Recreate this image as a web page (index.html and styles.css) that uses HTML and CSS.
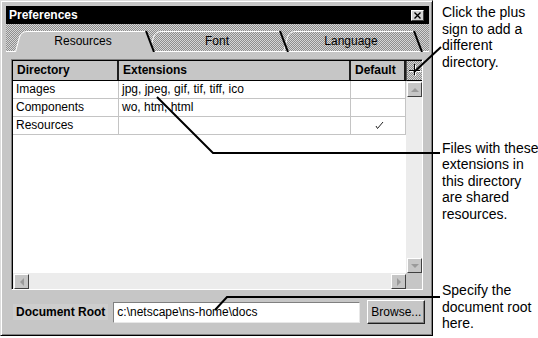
FILE: index.html
```html
<!DOCTYPE html>
<html lang="en">
<head>
    <meta charset="UTF-8">
    <title>Preferences</title>
    <link rel="stylesheet" href="styles.css">
</head>
<body>
<div class="page">
    <div class="window">
        <div class="titlebar">
            <span class="title">Preferences</span>
            <span class="close">
                <svg width="7" height="7" viewBox="0 0 7 7"><path d="M0.5,0.5 L6.5,6.5 M6.5,0.5 L0.5,6.5" stroke="#000" stroke-width="1.4"/></svg>
            </span>
        </div>

        <div class="tabs">
            <div class="tab tab-active">
                <svg width="140" height="22" viewBox="0 0 140 22">
                    <path d="M0,22 L4,7 Q6,1 12,1 L131,1 L139,22 Z" fill="#c6c6c6"/>
                    <path d="M0.5,22 L4.5,7 Q6.5,1.5 12,1.5 L131,1.5" fill="none" stroke="#fff"/>
                    <path d="M131,1 L139,22" stroke="#000" stroke-width="2"/>
                </svg>
                <span>Resources</span>
            </div>
            <div class="tab tab-font">
                <svg width="140" height="22" viewBox="0 0 140 22">
                    <path d="M0.5,22 L4.5,7 Q6.5,1.5 12,1.5 L131,1.5" fill="none" stroke="#fff"/>
                    <path d="M131,1 L139,22" stroke="#000" stroke-width="2"/>
                </svg>
                <span>Font</span>
            </div>
            <div class="tab">
                <svg width="140" height="22" viewBox="0 0 140 22">
                    <path d="M0.5,22 L4.5,7 Q6.5,1.5 12,1.5 L131,1.5" fill="none" stroke="#fff"/>
                    <path d="M131,1 L139,22" stroke="#000" stroke-width="2"/>
                </svg>
                <span>Language</span>
            </div>
        </div>

        <div class="panel">
            <div class="table">
                <div class="head">
                    <div class="hcell">Directory</div>
                    <div class="hcell">Extensions</div>
                    <div class="hcell">Default</div>
                </div>
                <div class="plus">
                    <svg width="16" height="18" viewBox="0 0 16 18">
                        <path d="M8.5,4 V15 M3,10.5 H14" stroke="#fff" stroke-width="1"/>
                        <path d="M7.5,3 V14 M2,9.5 H13" stroke="#000" stroke-width="1"/>
                    </svg>
                </div>

                <div class="rows">
                    <div class="row">
                        <div class="cell">Images</div>
                        <div class="cell">jpg, jpeg, gif, tif, tiff, ico</div>
                        <div class="cell"></div>
                    </div>
                    <div class="row">
                        <div class="cell">Components</div>
                        <div class="cell">wo, htm, html</div>
                        <div class="cell"></div>
                    </div>
                    <div class="row">
                        <div class="cell">Resources</div>
                        <div class="cell"></div>
                        <div class="cell cell-check">
                            <svg width="9" height="9" viewBox="0 0 9 9"><path d="M1,5 L2.5,7.5 L8,1" fill="none" stroke="#222" stroke-width="1"/></svg>
                        </div>
                    </div>
                </div>

                <div class="vscroll">
                    <div class="arrow"><i class="tri tri-up"></i></div>
                    <div class="arrow"><i class="tri tri-down"></i></div>
                </div>
                <div class="hscroll">
                    <div class="arrow"><i class="tri tri-left"></i></div>
                    <div class="arrow"><i class="tri tri-right"></i></div>
                </div>
                <div class="corner"></div>
            </div>

            <div class="doc-row">
                <span class="doc-label">Document Root</span>
                <div class="doc-input">c:\netscape\ns-home\docs</div>
                <button class="browse">Browse...</button>
            </div>
        </div>
    </div>

    <div class="notes">
        <p class="note">Click the plus<br>sign to add a<br>different<br>directory.</p>
        <p class="note note-files">Files with these<br>extensions in<br>this directory<br>are shared<br>resources.</p>
        <p class="note note-root">Specify the<br>document root<br>here.</p>
    </div>

    <!-- callout leader lines -->
    <svg class="leaders" width="538" height="338" viewBox="0 0 538 338">
        <path d="M441,47 L414,72" stroke="#000" stroke-width="2"/>
        <path d="M440,153 H213 L157,97" fill="none" stroke="#000" stroke-width="2"/>
        <path d="M440,297 H227 L215,310" fill="none" stroke="#000" stroke-width="2"/>
    </svg>
</div>
</body>
</html>
```

FILE: styles.css
```css
body {
    margin: 0;
    background: #fff;
    font-family: "Liberation Sans", Arial, sans-serif;
    font-size: 12px;
    color: #000;
}

.page {
    position: relative;
    display: flex;
    width: 538px;
    height: 338px;
}

.window {
    flex: none;
    width: 433px;
    height: 336px;
    box-sizing: border-box;
    display: flex;
    flex-direction: column;
    background: #c6c6c6;
    border: 1px solid;
    border-color: #dcdcdc #000 #000 #dcdcdc;
    box-shadow: inset 1px 1px #fff, inset -1px -1px #808080;
    padding: 5px 3px 2px 5px;
}

.titlebar {
    height: 18px;
    flex: none;
    background: #000;
    color: #fff;
    display: flex;
    align-items: center;
    justify-content: space-between;
    padding: 0 5px 0 3px;
    font-weight: bold;
}

.close {
    width: 13px;
    height: 11px;
    box-sizing: border-box;
    display: flex;
    align-items: center;
    justify-content: center;
    background: #d4d4d4;
    border: 1px solid;
    border-color: #fff #404040 #404040 #fff;
}

.tabs {
    height: 28px;
    flex: none;
    display: flex;
    padding-left: 9px;
    background: repeating-conic-gradient(#8e8e8e 0 25%, #d6d6d6 0 50%) 0 0 / 2px 2px;
    box-shadow: inset 0 -1px #fff;
}

.tab {
    position: relative;
    flex: none;
    width: 140px;
    margin-right: -6px;
    z-index: 1;
}

.tab svg {
    position: absolute;
    left: 0;
    top: 6px;
}

.tab span {
    position: relative;
    display: block;
    width: 136px;
    padding-top: 10px;
    line-height: 14px;
    text-align: center;
}

.tab-active {
    z-index: 3;
}

.tab-font {
    z-index: 2;
}

.panel {
    flex: 1;
    display: flex;
    flex-direction: column;
    padding: 7px 4px 0 5px;
}

.table {
    width: 412px;
    height: 231px;
    box-sizing: border-box;
    border: 1px solid;
    border-color: #808080 #fff #fff #808080;
    box-shadow: inset 1px 1px #000;
    padding: 1px 0 0 1px;
    display: grid;
    grid-template-columns: 1fr 16px;
    grid-template-rows: 20px 1fr 16px;
}

.head,
.row {
    display: grid;
    grid-template-columns: 106px 232px 1fr;
}

.head {
    background: #c6c6c6;
    border-bottom: 1px solid #000;
}

.hcell {
    padding-left: 4px;
    line-height: 19px;
    font-weight: bold;
    border-right: 2px solid #1e1e1e;
}

.plus {
    background: repeating-conic-gradient(#8e8e8e 0 25%, #d6d6d6 0 50%) 0 0 / 2px 2px;
    border-bottom: 1px solid #000;
    border-left: 1px solid #555;
}

.plus svg {
    display: block;
}

.rows {
    background: #fff;
}

.cell {
    height: 18px;
    box-sizing: border-box;
    padding-left: 3px;
    line-height: 17px;
    border-right: 1px solid #c4c4c4;
    border-bottom: 1px solid #c4c4c4;
    white-space: nowrap;
}

.cell-check {
    display: flex;
    align-items: center;
    justify-content: center;
}

.vscroll {
    background: #ececec;
    display: flex;
    flex-direction: column;
    justify-content: space-between;
    padding: 1px 0 0 1px;
}

.hscroll {
    background: #ececec;
    display: flex;
    justify-content: space-between;
    padding: 1px 0 0 1px;
}

.corner {
    background: #c6c6c6;
}

.arrow {
    width: 15px;
    height: 15px;
    box-sizing: border-box;
    display: flex;
    align-items: center;
    justify-content: center;
    background: #c6c6c6;
    border: 1px solid;
    border-color: #fff #404040 #404040 #fff;
}

.tri {
    width: 0;
    height: 0;
    border: 4px solid transparent;
}

.tri-up {
    border-bottom-color: #9a9a9a;
    border-top-width: 0;
}

.tri-down {
    border-top-color: #9a9a9a;
    border-bottom-width: 0;
}

.tri-left {
    border-right-color: #9a9a9a;
    border-left-width: 0;
}

.tri-right {
    border-left-color: #9a9a9a;
    border-right-width: 0;
}

.doc-row {
    display: flex;
    align-items: center;
    height: 24px;
    margin-top: 10px;
}

.doc-label {
    flex: none;
    margin-left: 2px;
    padding: 0 3px;
    line-height: 16px;
    font-weight: bold;
    white-space: nowrap;
    background: #cdcdcd;
}

.doc-input {
    flex: none;
    width: 247px;
    height: 21px;
    box-sizing: border-box;
    margin-left: 5px;
    padding-left: 3px;
    line-height: 19px;
    background: #fff;
    border: 1px solid;
    border-color: #808080 #e8e8e8 #e8e8e8 #808080;
}

.browse {
    flex: none;
    width: 58px;
    height: 24px;
    margin-left: 7px;
    padding: 0;
    font: inherit;
    color: #000;
    background: #c6c6c6;
    border: 1px solid;
    border-color: #fff #202020 #202020 #fff;
    box-shadow: inset -1px -1px #808080;
}

.notes {
    flex: none;
    margin-left: 9px;
    padding-top: 4px;
    font-size: 14px;
    line-height: 16.5px;
    white-space: nowrap;
}

.note {
    margin: 0;
}

.note-files {
    margin-top: 69.5px;
}

.note-root {
    margin-top: 60px;
}

.leaders {
    position: absolute;
    left: 0;
    top: 0;
    pointer-events: none;
}
```
